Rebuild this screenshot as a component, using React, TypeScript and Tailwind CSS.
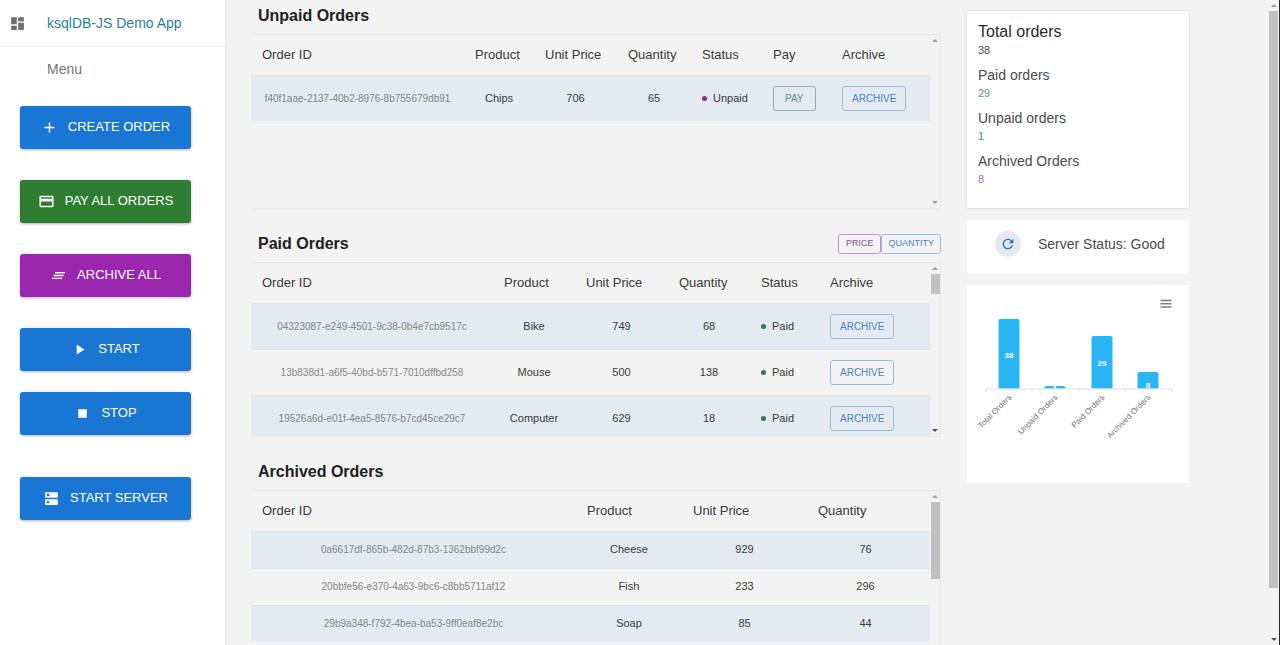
import type { ReactNode } from 'react';
import type { IconType } from 'react-icons';
import {
  MdAdd,
  MdClearAll,
  MdDashboard,
  MdDns,
  MdPayment,
  MdPlayArrow,
  MdRefresh,
  MdStop,
} from 'react-icons/md';

type MenuAction = { label: string; icon: IconType; style: string };

const menuActions: MenuAction[] = [
  { label: 'CREATE ORDER', icon: MdAdd, style: 'bg-[#1976d2]' },
  { label: 'PAY ALL ORDERS', icon: MdPayment, style: 'mt-[31px] bg-[#2e7d32]' },
  { label: 'ARCHIVE ALL', icon: MdClearAll, style: 'mt-[31px] bg-[#9a27ad]' },
  { label: 'START', icon: MdPlayArrow, style: 'mt-[31px] bg-[#1976d2]' },
  { label: 'STOP', icon: MdStop, style: 'mt-[21px] bg-[#1976d2]' },
  { label: 'START SERVER', icon: MdDns, style: 'mt-[42px] bg-[#1976d2]' },
];

const unpaidOrders = [
  { id: 'f40f1aae-2137-40b2-8976-8b755679db91', product: 'Chips', price: 706, quantity: 65 },
];

const paidOrders = [
  { id: '04323087-e249-4501-9c38-0b4e7cb9517c', product: 'Bike', price: 749, quantity: 68 },
  { id: '13b838d1-a6f5-40bd-b571-7010dffbd258', product: 'Mouse', price: 500, quantity: 138 },
  { id: '19526a6d-e01f-4ea5-8576-b7cd45ce29c7', product: 'Computer', price: 629, quantity: 18 },
];

const archivedOrders = [
  { id: '0a6617df-865b-482d-87b3-1362bbf99d2c', product: 'Cheese', price: 929, quantity: 76 },
  { id: '20bbfe56-e370-4a63-9bc6-c8bb5711af12', product: 'Fish', price: 233, quantity: 296 },
  { id: '29b9a348-f792-4bea-ba53-9ff0eaf8e2bc', product: 'Soap', price: 85, quantity: 44 },
];

const totals = [
  { label: 'Total orders', value: 38, labelStyle: 'text-base text-[#2b2b2b]', valueStyle: 'text-[#4a4a4a]' },
  { label: 'Paid orders', value: 29, labelStyle: 'text-sm text-[#4a4a4a]', valueStyle: 'text-[#5f8f8a]' },
  { label: 'Unpaid orders', value: 1, labelStyle: 'text-sm text-[#4a4a4a]', valueStyle: 'text-[#4a86c0]' },
  { label: 'Archived Orders', value: 8, labelStyle: 'text-sm text-[#4a4a4a]', valueStyle: 'text-[#a878ae]' },
];

const bars = [
  { label: 'Total Orders', value: 38, center: 42, top: 34, labelY: 73 },
  { label: 'Unpaid Orders', value: 1, center: 88, top: 101, labelY: 106 },
  { label: 'Paid Orders', value: 29, center: 135, top: 51, labelY: 81 },
  { label: 'Archived Orders', value: 8, center: 181, top: 87, labelY: 103 },
];

function Arrow({ down = false, dark = false }: { down?: boolean; dark?: boolean }) {
  return (
    <svg viewBox="0 0 6 3" className={`h-[3px] w-[6px] shrink-0 ${dark ? 'text-[#505050]' : 'text-[#a0a0a0]'}`} aria-hidden="true">
      <path d={down ? 'M0 0h6L3 3z' : 'M0 3h6L3 0z'} fill="currentColor" />
    </svg>
  );
}

function ScrollTrack({ thumb, darkDown = false }: { thumb?: string; darkDown?: boolean }) {
  return (
    <div className="flex w-[10px] shrink-0 flex-col items-center justify-between bg-[#f2f2f2] pt-1 pb-1">
      <div className="flex w-full flex-col items-center gap-1">
        <Arrow />
        {thumb && <div className={`w-[9px] bg-[#c1c1c1] ${thumb}`} />}
      </div>
      <Arrow down dark={darkDown} />
    </div>
  );
}

function OutlineButton({ children, style }: { children: ReactNode; style: string }) {
  return (
    <button type="button" className={`rounded-[3px] border ${style}`}>
      {children}
    </button>
  );
}

const archiveStyle = 'h-[25px] px-[9px] text-[10px] border-[#9bbbdc] text-[#4a84c0] align-middle';
const payStyle = 'h-[25px] px-[11px] text-[10px] border-[#93aeb2] text-[#678a98] align-middle';

function OrderTable({
  columns,
  rowHeight,
  rows,
}: {
  columns: { title: string; width: string }[];
  rowHeight: string;
  rows: { key: string; cells: ReactNode }[];
}) {
  return (
    <table className="w-full table-fixed border-collapse">
      <colgroup>
        {columns.map((c) => (
          <col key={c.title} className={c.width} />
        ))}
      </colgroup>
      <thead>
        <tr className="h-10">
          {columns.map((c) => (
            <th key={c.title} className="p-0 pl-[11px] text-left text-[13px] leading-4 font-normal whitespace-nowrap text-[#3a3a3a]">
              {c.title}
            </th>
          ))}
        </tr>
      </thead>
      <tbody>
        {rows.map((r) => (
          <tr key={r.key} className={`odd:bg-[#e3eaf2] shadow-[inset_0_1px_0_#dfe3e7] ${rowHeight}`}>
            {r.cells}
          </tr>
        ))}
      </tbody>
    </table>
  );
}

function BaseCells({ id, product, price, quantity, last = 'px-[11px]' }: { id: string; product: string; price: number; quantity: number; last?: string }) {
  return (
    <>
      <td className="p-0 text-center text-[10px] whitespace-nowrap text-[#858585]">{id}</td>
      <td className="p-0 text-center">{product}</td>
      <td className="p-0 text-center">{price}</td>
      <td className={`py-0 text-center ${last}`}>{quantity}</td>
    </>
  );
}

function Status({ label, dot }: { label: string; dot: string }) {
  return (
    <td className="p-0 pl-[11px]">
      <span className="flex items-center gap-[6px]">
        <span className={`size-[5px] rounded-full ${dot}`} />
        {label}
      </span>
    </td>
  );
}

function Section({ title, actions, first = false, box, track, children }: {
  title: string;
  actions?: ReactNode;
  first?: boolean;
  box: string;
  track: ReactNode;
  children: ReactNode;
}) {
  return (
    <section className={first ? 'pt-[6px]' : 'pt-[25px]'}>
      <div className="mb-2 flex h-5 items-center justify-between">
        <h2 className="pl-[7px] text-base leading-5 font-bold text-[#212121]">{title}</h2>
        {actions}
      </div>
      <div className={`flex overflow-hidden border-y border-r border-[#e8e8e8] text-[11px] text-[#3a3a3a] ${box}`}>
        <div className="min-w-0 flex-1">{children}</div>
        {track}
      </div>
    </section>
  );
}

function OrdersChart() {
  return (
    <svg viewBox="0 0 222 198" className="block w-full" role="img" aria-label="Orders by state" fontFamily="'Liberation Sans', Arial, sans-serif">
      <g stroke="#74808c" strokeWidth="1.4">
        <path d="M193.5 15.5h11M193.5 18.8h11M193.5 22h11" />
      </g>
      {bars.map((b) => (
        <g key={b.label}>
          <path
            d={`M${b.center - 10.5} 103.5V${Math.min(b.top + 2, 103)}q0-2 2-2h17q2 0 2 2V103.5z`}
            fill="#2ab5f5"
          />
          <text x={b.center} y={b.labelY} textAnchor="middle" fontSize="8" fontWeight="700" fill="#fff">
            {b.value}
          </text>
          <text x={b.center + 3} y="113" textAnchor="end" fontSize="8" fill="#6f6f6f" transform={`rotate(-45 ${b.center + 3} 113)`}>
            {b.label}
          </text>
        </g>
      ))}
      <path d="M18.5 104h186M18.5 104v3M65 104v3M111.5 104v3M158 104v3M204.5 104v3" stroke="#e0e0e0" fill="none" />
    </svg>
  );
}

export default function App() {
  return (
    <div className="flex h-screen overflow-hidden bg-[#f3f3f3] font-['Liberation_Sans',Arial,sans-serif]">
      <aside className="flex w-[226px] shrink-0 flex-col border-r border-[#e2e2e2] bg-white">
        <header className="flex h-[47px] shrink-0 items-center border-b border-[#ededed] pl-[9px]">
          <MdDashboard className="size-[17px] text-[#6f6f6f]" />
          <h1 className="pl-[21px] text-sm leading-5 text-[#2a7f94]">ksqlDB-JS Demo App</h1>
        </header>
        <p className="pt-3 pl-[47px] text-sm leading-5 text-[#757575]">Menu</p>
        <nav className="flex flex-col pt-[27px] pr-[34px] pl-5">
          {menuActions.map(({ label, icon: Icon, style }) => (
            <button
              key={label}
              type="button"
              className={`flex h-[43px] items-center justify-center gap-[10px] rounded-[3px] text-[13px] text-white shadow-[0_1px_3px_rgba(0,0,0,0.3)] ${style}`}
            >
              <Icon className="size-[17px]" />
              <span className="pb-[2px]">{label}</span>
            </button>
          ))}
        </nav>
      </aside>

      <main className="flex min-w-0 flex-1 items-start gap-[26px] pr-[79px] pl-[25px]">
        <div className="min-w-0 flex-[690]">
          <Section title="Unpaid Orders" first box="h-[175px]" track={<ScrollTrack />}>
            <OrderTable
              columns={[
                { title: 'Order ID', width: 'w-[213px]' },
                { title: 'Product', width: 'w-[70px]' },
                { title: 'Unit Price', width: 'w-[83px]' },
                { title: 'Quantity', width: 'w-[74px]' },
                { title: 'Status', width: 'w-[71px]' },
                { title: 'Pay', width: 'w-[69px]' },
                { title: 'Archive', width: 'w-[99px]' },
              ]}
              rowHeight="h-[46px]"
              rows={unpaidOrders.map((o) => ({
                key: o.id,
                cells: (
                  <>
                    <BaseCells {...o} />
                    <Status label="Unpaid" dot="bg-[#8a2a9a]" />
                    <td className="p-0 pl-[11px]"><OutlineButton style={payStyle}>PAY</OutlineButton></td>
                    <td className="p-0 pl-[11px]"><OutlineButton style={archiveStyle}>ARCHIVE</OutlineButton></td>
                  </>
                ),
              }))}
            />
          </Section>

          <Section
            title="Paid Orders"
            box="h-[175px]"
            track={<ScrollTrack thumb="h-5" darkDown />}
            actions={
              <div className="flex">
                <OutlineButton style="h-5 px-[7px] text-[9px] border-[#c394c9] text-[#8f4d97]">PRICE</OutlineButton>
                <OutlineButton style="h-5 px-[6px] text-[9px] border-[#9bbbdc] text-[#4a84c0]">QUANTITY</OutlineButton>
              </div>
            }
          >
            <OrderTable
              columns={[
                { title: 'Order ID', width: 'w-[242px]' },
                { title: 'Product', width: 'w-[82px]' },
                { title: 'Unit Price', width: 'w-[93px]' },
                { title: 'Quantity', width: 'w-[82px]' },
                { title: 'Status', width: 'w-[69px]' },
                { title: 'Archive', width: 'w-[111px]' },
              ]}
              rowHeight="h-[46px]"
              rows={paidOrders.map((o) => ({
                key: o.id,
                cells: (
                  <>
                    <BaseCells {...o} />
                    <Status label="Paid" dot="bg-[#2e7d42]" />
                    <td className="p-0 pl-[11px]"><OutlineButton style={archiveStyle}>ARCHIVE</OutlineButton></td>
                  </>
                ),
              }))}
            />
          </Section>

          <Section title="Archived Orders" box="h-[175px]" track={<ScrollTrack thumb="h-[77px]" />}>
            <OrderTable
              columns={[
                { title: 'Order ID', width: 'w-[325px]' },
                { title: 'Product', width: 'w-[106px]' },
                { title: 'Unit Price', width: 'w-[125px]' },
                { title: 'Quantity', width: 'w-[123px]' },
              ]}
              rowHeight="h-[37px]"
              rows={archivedOrders.map((o) => ({
                key: o.id,
                cells: <BaseCells {...o} last="pr-[17px] pl-[11px]" />,
              }))}
            />
          </Section>
        </div>

        <div className="flex min-w-0 flex-[222] flex-col gap-3 pt-[11px]">
          <dl className="flex flex-col gap-[7px] bg-white px-[11px] pt-[11px] pb-[21px] shadow-[0_0_2px_rgba(0,0,0,0.2)]">
            {totals.map((t) => (
              <div key={t.label}>
                <dt className={`leading-5 ${t.labelStyle}`}>{t.label}</dt>
                <dd className={`text-[11px] leading-4 ${t.valueStyle}`}>{t.value}</dd>
              </div>
            ))}
          </dl>
          <div className="flex h-[53px] items-center gap-[17px] bg-white pb-[5px] pl-7">
            <button type="button" aria-label="Refresh" className="flex size-[26px] shrink-0 items-center justify-center rounded-full bg-[#e7e8ea] text-[#1f74c8]">
              <MdRefresh className="size-4" />
            </button>
            <p className="text-sm leading-5 whitespace-nowrap text-[#4a4a4a]">Server Status: Good</p>
          </div>
          <div className="bg-white">
            <OrdersChart />
          </div>
        </div>
      </main>

      <div className="flex w-3 shrink-0 flex-col items-center justify-between border-r border-[#2a2a2a] pt-1 pb-1">
        <div className="flex h-11/12 w-full flex-col items-center gap-1">
          <Arrow />
          <div className="w-[9px] flex-1 bg-[#c1c1c1]" />
        </div>
        <Arrow down dark />
      </div>
    </div>
  );
}
